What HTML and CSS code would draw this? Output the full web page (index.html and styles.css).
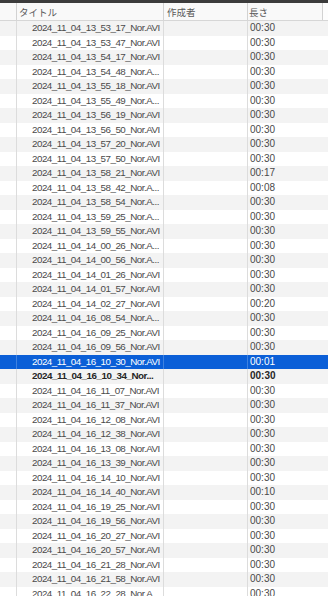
FILE: index.html
```html
<!DOCTYPE html>
<html lang="ja">
<head>
<meta charset="utf-8">
<link rel="stylesheet" href="styles.css">
</head>
<body>
<div class="list">
  <div class="topbar"></div>
  <div class="head">
    <div class="hc c0"></div>
    <div class="hc c1">タイトル</div>
    <div class="hc c2">作成者</div>
    <div class="hc c3">長さ</div>
    <div class="hc c4"></div>
  </div>
  <div class="rows">
    <div class="row"><div class="c0"></div><div class="c1">2024_11_04_13_53_17_Nor.AVI</div><div class="c2"></div><div class="c3">00:30</div></div>
    <div class="row"><div class="c0"></div><div class="c1">2024_11_04_13_53_47_Nor.AVI</div><div class="c2"></div><div class="c3">00:30</div></div>
    <div class="row"><div class="c0"></div><div class="c1">2024_11_04_13_54_17_Nor.AVI</div><div class="c2"></div><div class="c3">00:30</div></div>
    <div class="row"><div class="c0"></div><div class="c1">2024_11_04_13_54_48_Nor.A...</div><div class="c2"></div><div class="c3">00:30</div></div>
    <div class="row"><div class="c0"></div><div class="c1">2024_11_04_13_55_18_Nor.AVI</div><div class="c2"></div><div class="c3">00:30</div></div>
    <div class="row"><div class="c0"></div><div class="c1">2024_11_04_13_55_49_Nor.A...</div><div class="c2"></div><div class="c3">00:30</div></div>
    <div class="row"><div class="c0"></div><div class="c1">2024_11_04_13_56_19_Nor.AVI</div><div class="c2"></div><div class="c3">00:30</div></div>
    <div class="row"><div class="c0"></div><div class="c1">2024_11_04_13_56_50_Nor.AVI</div><div class="c2"></div><div class="c3">00:30</div></div>
    <div class="row"><div class="c0"></div><div class="c1">2024_11_04_13_57_20_Nor.AVI</div><div class="c2"></div><div class="c3">00:30</div></div>
    <div class="row"><div class="c0"></div><div class="c1">2024_11_04_13_57_50_Nor.AVI</div><div class="c2"></div><div class="c3">00:30</div></div>
    <div class="row"><div class="c0"></div><div class="c1">2024_11_04_13_58_21_Nor.AVI</div><div class="c2"></div><div class="c3">00:17</div></div>
    <div class="row"><div class="c0"></div><div class="c1">2024_11_04_13_58_42_Nor.A...</div><div class="c2"></div><div class="c3">00:08</div></div>
    <div class="row"><div class="c0"></div><div class="c1">2024_11_04_13_58_54_Nor.A...</div><div class="c2"></div><div class="c3">00:30</div></div>
    <div class="row"><div class="c0"></div><div class="c1">2024_11_04_13_59_25_Nor.A...</div><div class="c2"></div><div class="c3">00:30</div></div>
    <div class="row"><div class="c0"></div><div class="c1">2024_11_04_13_59_55_Nor.AVI</div><div class="c2"></div><div class="c3">00:30</div></div>
    <div class="row"><div class="c0"></div><div class="c1">2024_11_04_14_00_26_Nor.A...</div><div class="c2"></div><div class="c3">00:30</div></div>
    <div class="row"><div class="c0"></div><div class="c1">2024_11_04_14_00_56_Nor.A...</div><div class="c2"></div><div class="c3">00:30</div></div>
    <div class="row"><div class="c0"></div><div class="c1">2024_11_04_14_01_26_Nor.AVI</div><div class="c2"></div><div class="c3">00:30</div></div>
    <div class="row"><div class="c0"></div><div class="c1">2024_11_04_14_01_57_Nor.AVI</div><div class="c2"></div><div class="c3">00:30</div></div>
    <div class="row"><div class="c0"></div><div class="c1">2024_11_04_14_02_27_Nor.AVI</div><div class="c2"></div><div class="c3">00:20</div></div>
    <div class="row"><div class="c0"></div><div class="c1">2024_11_04_16_08_54_Nor.A...</div><div class="c2"></div><div class="c3">00:30</div></div>
    <div class="row"><div class="c0"></div><div class="c1">2024_11_04_16_09_25_Nor.AVI</div><div class="c2"></div><div class="c3">00:30</div></div>
    <div class="row"><div class="c0"></div><div class="c1">2024_11_04_16_09_56_Nor.AVI</div><div class="c2"></div><div class="c3">00:30</div></div>
    <div class="row selected"><div class="c0"></div><div class="c1">2024_11_04_16_10_30_Nor.AVI</div><div class="c2"></div><div class="c3">00:01</div></div>
    <div class="row bold"><div class="c0"></div><div class="c1">2024_11_04_16_10_34_Nor...</div><div class="c2"></div><div class="c3">00:30</div></div>
    <div class="row"><div class="c0"></div><div class="c1">2024_11_04_16_11_07_Nor.AVI</div><div class="c2"></div><div class="c3">00:30</div></div>
    <div class="row"><div class="c0"></div><div class="c1">2024_11_04_16_11_37_Nor.AVI</div><div class="c2"></div><div class="c3">00:30</div></div>
    <div class="row"><div class="c0"></div><div class="c1">2024_11_04_16_12_08_Nor.AVI</div><div class="c2"></div><div class="c3">00:30</div></div>
    <div class="row"><div class="c0"></div><div class="c1">2024_11_04_16_12_38_Nor.AVI</div><div class="c2"></div><div class="c3">00:30</div></div>
    <div class="row"><div class="c0"></div><div class="c1">2024_11_04_16_13_08_Nor.AVI</div><div class="c2"></div><div class="c3">00:30</div></div>
    <div class="row"><div class="c0"></div><div class="c1">2024_11_04_16_13_39_Nor.AVI</div><div class="c2"></div><div class="c3">00:30</div></div>
    <div class="row"><div class="c0"></div><div class="c1">2024_11_04_16_14_10_Nor.AVI</div><div class="c2"></div><div class="c3">00:30</div></div>
    <div class="row"><div class="c0"></div><div class="c1">2024_11_04_16_14_40_Nor.AVI</div><div class="c2"></div><div class="c3">00:10</div></div>
    <div class="row"><div class="c0"></div><div class="c1">2024_11_04_16_19_25_Nor.AVI</div><div class="c2"></div><div class="c3">00:30</div></div>
    <div class="row"><div class="c0"></div><div class="c1">2024_11_04_16_19_56_Nor.AVI</div><div class="c2"></div><div class="c3">00:30</div></div>
    <div class="row"><div class="c0"></div><div class="c1">2024_11_04_16_20_27_Nor.AVI</div><div class="c2"></div><div class="c3">00:30</div></div>
    <div class="row"><div class="c0"></div><div class="c1">2024_11_04_16_20_57_Nor.AVI</div><div class="c2"></div><div class="c3">00:30</div></div>
    <div class="row"><div class="c0"></div><div class="c1">2024_11_04_16_21_28_Nor.AVI</div><div class="c2"></div><div class="c3">00:30</div></div>
    <div class="row"><div class="c0"></div><div class="c1">2024_11_04_16_21_58_Nor.AVI</div><div class="c2"></div><div class="c3">00:30</div></div>
    <div class="row"><div class="c0"></div><div class="c1">2024_11_04_16_22_28_Nor.A...</div><div class="c2"></div><div class="c3">00:30</div></div>
  </div>
</div>
</body>
</html>
```

FILE: styles.css
```css
html, body {
  margin: 0;
  padding: 0;
  background: #ffffff;
  overflow: hidden;
}

.list {
  width: 328px;
  height: 596px;
  overflow: hidden;
  font-family: "Liberation Sans", "Noto Sans CJK JP", sans-serif;
  font-size: 9.8px;
  color: #4a4a4a;
}

.topbar {
  height: 3px;
  background: #3c3c3c;
}

.head {
  display: grid;
  grid-template-columns: 17px 147px 84px 75px 1fr;
  height: 17px;
  background: #f9f9f9;
  border-bottom: 1px solid #d6d6d6;
  box-sizing: content-box;
}

.hc {
  display: flex;
  align-items: center;
  font-family: "Noto Sans CJK JP", sans-serif;
  font-size: 9.5px;
  color: #5a5a5a;
  white-space: nowrap;
}

.hc.c0, .hc.c1, .hc.c2, .hc.c3 {
  border-right: 1px solid #d2d2d2;
}

.hc.c1 { padding-left: 2px; }
.hc.c2 { padding-left: 3px; }
.hc.c3 { padding-left: 1px; }
.hc.c4 { background: #fdfdfd; }

.row {
  display: grid;
  grid-template-columns: 17px 147px 84px 1fr;
  height: 14.5px;
  line-height: 14.5px;
  white-space: nowrap;
}

.row:nth-child(odd) {
  background: #f3f3f3;
}

.row .c0, .row .c1, .row .c2 {
  border-right: 1px solid #dcdcdc;
}

.row .c1 {
  padding-left: 15px;
  letter-spacing: -0.5px;
  overflow: hidden;
}

.row .c3 {
  padding-left: 2px;
  font-size: 10px;
}

.row.selected {
  background: #0b5fd7;
  color: #ffffff;
}

.row.selected .c0, .row.selected .c1, .row.selected .c2 {
  border-right-color: #3f82e0;
}

.row.bold {
  font-weight: bold;
  color: #262626;
}

.row.bold .c1 {
  letter-spacing: -0.45px;
}
```
